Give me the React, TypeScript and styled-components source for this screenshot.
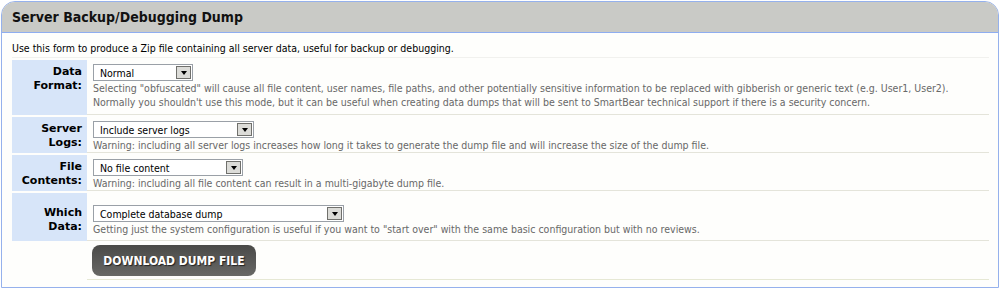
import { createGlobalStyle, styled } from "styled-components";

const GlobalStyle = createGlobalStyle`
  body {
    margin: 0;
    background: #ffffff;
    font-family: Tahoma, "DejaVu Sans Condensed", "Liberation Sans", sans-serif;
  }
`;

const Panel = styled.div`
  box-sizing: border-box;
  width: 998px;
  height: 287px;
  margin: 1px 0 0 1px;
  border: 1px solid #95b1ec;
  border-radius: 14px 14px 0 0;
  background: #fefefc;
  overflow: hidden;
`;

const Header = styled.div`
  height: 30px;
  padding-left: 10px;
  display: flex;
  align-items: center;
  background: #c9cac6;
  border-bottom: 1px solid #8eadf0;
  font-size: 14px;
  font-weight: bold;
  color: #111;
`;

const Body = styled.div`
  padding: 0 9px 0 10px;
`;

const Intro = styled.div`
  padding: 8px 0 2px 0;
  font-size: 10.5px;
  line-height: 14px;
  color: #000;
  border-bottom: 1px solid #f1f1ee;
`;

const Table = styled.div`
  display: grid;
  grid-template-columns: 75px 1fr;
`;

const Row = styled.div`
  display: contents;
`;

const Label = styled.div<{ $top: number }>`
  background: #d7e5f9;
  border-top: 2px solid #fefefc;
  padding: ${(p) => 5 + p.$top}px 5px 0 0;
  text-align: right;
  font-family: "DejaVu Sans", "Liberation Sans", sans-serif;
  font-size: 11px;
  font-weight: bold;
  line-height: 14px;
  color: #000;
`;

const Value = styled.div<{ $top: number; $bottom: number }>`
  border-top: 2px solid #fefefc;
  border-bottom: 1px solid #e4e4da;
  padding: ${(p) => 4 + p.$top}px 0 ${(p) => p.$bottom}px 6px;
`;

const Select = styled.div<{ $width: number }>`
  box-sizing: border-box;
  width: ${(p) => p.$width}px;
  height: 17px;
  display: flex;
  align-items: center;
  justify-content: space-between;
  border: 1px solid #9aa0a7;
  background: #fff;
  font-size: 10.5px;
  color: #000;
  padding: 0 1px 0 6px;
`;

const Arrow = styled.span`
  box-sizing: border-box;
  width: 15px;
  height: 13px;
  display: flex;
  align-items: center;
  justify-content: center;
  background: #dcdcd8;
  border: 1px solid #70706c;
  &::after {
    content: "";
    border-left: 3.5px solid transparent;
    border-right: 3.5px solid transparent;
    border-top: 4px solid #000;
  }
`;

const Help = styled.div`
  font-size: 10.5px;
  line-height: 14px;
  color: #686868;
`;

const ButtonRow = styled.div`
  grid-column: 2;
  padding: 4px 0 3px 5px;
  border-bottom: 1px solid #e6e8d4;
`;

const DownloadButton = styled.button`
  display: block;
  width: 164px;
  height: 31px;
  border: 0;
  border-radius: 8px;
  background: linear-gradient(#4a4a48, #686866);
  color: #fff;
  font-family: inherit;
  font-size: 12px;
  font-weight: bold;
  text-shadow: 1px 1px 1px #222;
  cursor: pointer;
`;

const fields = [
  {
    label: ["Data", "Format:"],
    value: "Normal",
    width: 100,
    top: 0,
    bottom: 5,
    help: [
      'Selecting "obfuscated" will cause all file content, user names, file paths, and other potentially sensitive information to be replaced with gibberish or generic text (e.g. User1, User2).',
      "Normally you shouldn't use this mode, but it can be useful when creating data dumps that will be sent to SmartBear technical support if there is a security concern.",
    ],
  },
  {
    label: ["Server", "Logs:"],
    value: "Include server logs",
    width: 161,
    top: 0,
    bottom: 0,
    help: [
      "Warning: including all server logs increases how long it takes to generate the dump file and will increase the size of the dump file.",
    ],
  },
  {
    label: ["File", "Contents:"],
    value: "No file content",
    width: 150,
    top: 0,
    bottom: 0,
    help: ["Warning: including all file content can result in a multi-gigabyte dump file."],
  },
  {
    label: ["Which", "Data:"],
    value: "Complete database dump",
    width: 251,
    top: 8,
    bottom: 4,
    help: [
      'Getting just the system configuration is useful if you want to "start over" with the same basic configuration but with no reviews.',
    ],
  },
];

export default function App() {
  return (
    <>
      <GlobalStyle />
      <Panel>
        <Header>Server Backup/Debugging Dump</Header>
        <Body>
          <Intro>
            Use this form to produce a Zip file containing all server data, useful for backup or
            debugging.
          </Intro>
          <Table>
            {fields.map((f) => (
              <Row key={f.value}>
                <Label $top={f.top}>
                  {f.label[0]}
                  <br />
                  {f.label[1]}
                </Label>
                <Value $top={f.top} $bottom={f.bottom}>
                  <Select $width={f.width}>
                    {f.value}
                    <Arrow />
                  </Select>
                  <Help>
                    {f.help.map((line) => (
                      <div key={line}>{line}</div>
                    ))}
                  </Help>
                </Value>
              </Row>
            ))}
            <ButtonRow>
              <DownloadButton>DOWNLOAD DUMP FILE</DownloadButton>
            </ButtonRow>
          </Table>
        </Body>
      </Panel>
    </>
  );
}
